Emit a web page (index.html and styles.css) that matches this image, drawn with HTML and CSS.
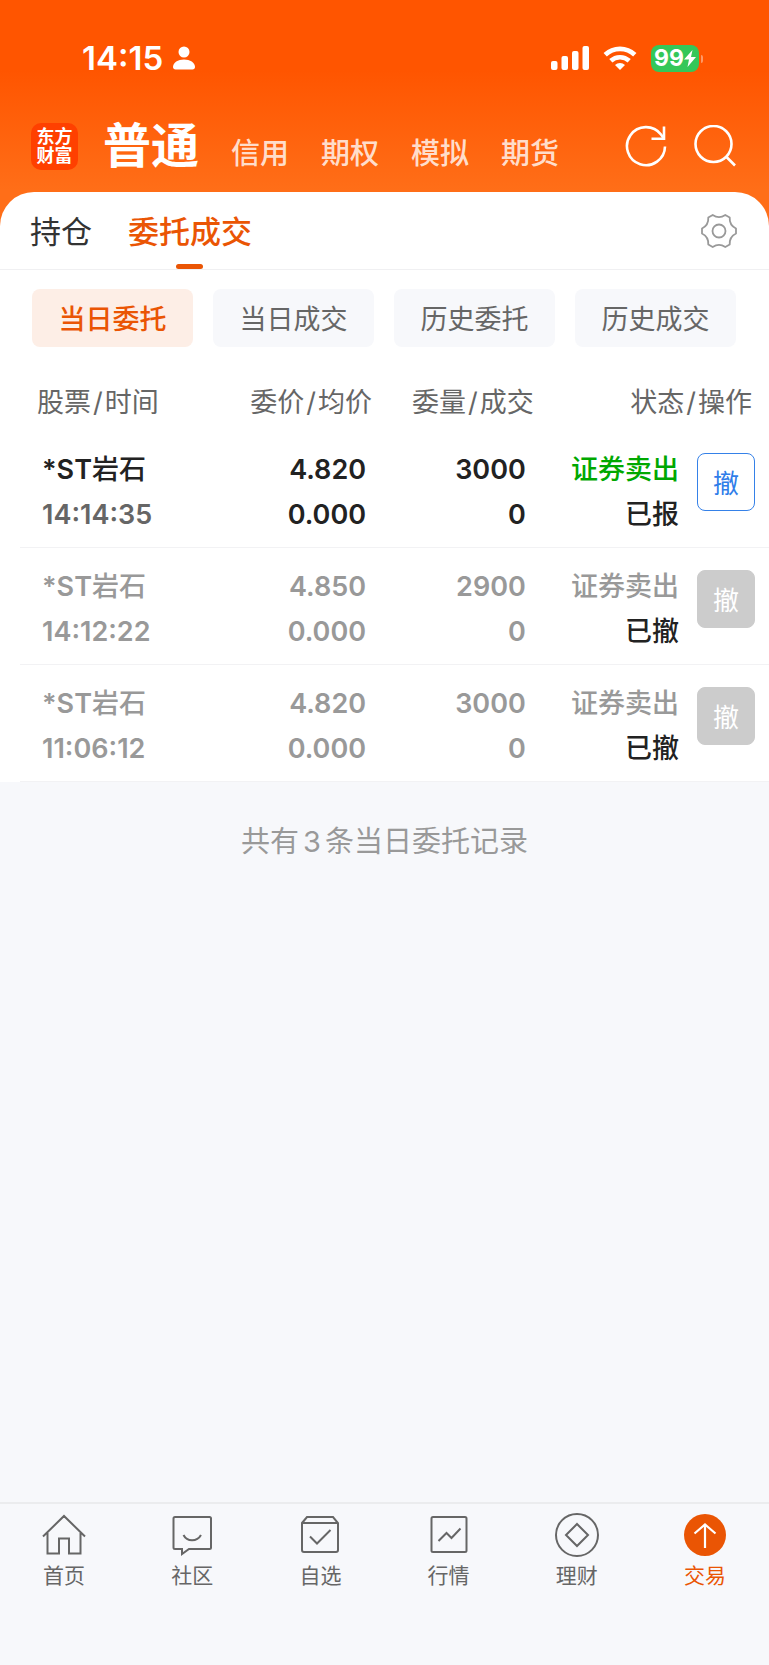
FILE: index.html
```
<!DOCTYPE html>
<html lang="zh-CN">
<head>
    <meta charset="UTF-8">
    <meta name="viewport" content="width=device-width, initial-scale=1.0">
    <title>委托成交</title>
    <link rel="stylesheet" href="styles.css">
</head>
<body>
    <header class="header">
        <div class="status-bar">
            <span class="time">14:15</span>
            <svg class="person" width="22" height="24" viewBox="0 0 22 24" fill="#fff">
                <circle cx="11" cy="6" r="5.500"/>
                <path d="M0 21C0 16.500 5 13.500 11 13.500S22 16.500 22 21C22 22.500 21 23.500 19.500 23.500H2.500C1 23.500 0 22.500 0 21Z"/>
            </svg>
            <div class="status-icons">
                <svg width="38" height="24" viewBox="0 0 38 24" fill="#fff">
                    <rect x="0" y="15" width="6.500" height="9" rx="2"/>
                    <rect x="10.500" y="10" width="6.500" height="14" rx="2"/>
                    <rect x="21" y="5" width="6.500" height="19" rx="2"/>
                    <rect x="31.500" y="0" width="6.500" height="24" rx="2"/>
                </svg>
                <svg width="34" height="24" viewBox="0 0 34 24">
                    <path d="M2.200 8.800A21.500 21.500 0 0 1 31.800 8.800" fill="none" stroke="#fff" stroke-width="4.800"/>
                    <path d="M7.800 14.800A13.500 13.500 0 0 1 26.200 14.800" fill="none" stroke="#fff" stroke-width="4.600"/>
                    <path d="M17 24L12 19A7.500 7.500 0 0 1 22 19Z" fill="#fff"/>
                </svg>
                <div class="battery">
                    <span>99</span>
                    <svg width="12" height="17" viewBox="0 0 12 17" fill="#fff">
                        <path d="M8.500 0L0 9.500H5L3.500 17L12 7H7Z"/>
                    </svg>
                </div>
            </div>
        </div>

        <div class="title-bar">
            <div class="logo">东方<br>财富</div>
            <nav class="accounts">
                <a href="#" class="current">普通</a>
                <a href="#">信用</a>
                <a href="#">期权</a>
                <a href="#">模拟</a>
                <a href="#">期货</a>
            </nav>
            <div class="actions">
                <button class="icon-btn" aria-label="刷新">
                    <svg width="42" height="42" viewBox="0 0 42 42" fill="none" stroke="#fff" stroke-width="2.600">
                        <path d="M40 21.500A19 19 0 1 1 36 9.500L38.500 13"/>
                        <path d="M39 1.500V13.700H26.500"/>
                    </svg>
                </button>
                <button class="icon-btn" aria-label="搜索">
                    <svg width="42" height="42" viewBox="0 0 42 42" fill="none" stroke="#fff" stroke-width="2.600">
                        <circle cx="19.500" cy="19" r="18"/>
                        <path d="M32 31.500L41 40.500"/>
                    </svg>
                </button>
            </div>
        </div>
    </header>

    <main class="sheet">
        <div class="tabs">
            <button class="tab">持仓</button>
            <button class="tab active">委托成交</button>
            <button class="icon-btn settings" aria-label="设置">
                <svg width="38" height="38" viewBox="-19 -19 38 38" fill="none" stroke="#999" stroke-width="1.800" stroke-linejoin="round">
                    <path d="M17 -2.500V2.500C12.900 4.600 10.400 8.900 10.700 13.500L6.300 16C2.500 13.500 -2.500 13.500 -6.300 16L-10.700 13.500C-10.400 8.900 -12.900 4.600 -17 2.500V-2.500C-12.900 -4.600 -10.400 -8.900 -10.700 -13.500L-6.300 -16C-2.500 -13.500 2.500 -13.500 6.300 -16L10.700 -13.500C10.400 -8.900 12.900 -4.600 17 -2.500Z"/>
                    <circle cx="0" cy="0" r="6.500"/>
                </svg>
            </button>
        </div>

        <div class="filters">
            <button class="filter active">当日委托</button>
            <button class="filter">当日成交</button>
            <button class="filter">历史委托</button>
            <button class="filter">历史成交</button>
        </div>

        <table class="orders">
            <colgroup>
                <col class="col-stock">
                <col class="col-price">
                <col class="col-amount">
                <col>
                <col class="col-operate">
            </colgroup>
            <thead>
                <tr>
                    <th class="stock-head">股票<span class="slash">/</span>时间</th>
                    <th>委价<span class="slash">/</span>均价</th>
                    <th class="amount-head">委量<span class="slash">/</span>成交</th>
                    <th class="state-head" colspan="2">状态<span class="slash">/</span>操作</th>
                </tr>
            </thead>
            <tbody>
                <tr>
                    <td class="stock">*ST<span class="name">岩石</span><br><span class="order-time">14:14:35</span></td>
                    <td class="price">4.820<br>0.000</td>
                    <td class="amount">3000<br>0</td>
                    <td class="state"><span class="sell">证券卖出</span><br><span class="result">已报</span></td>
                    <td class="operate"><button class="cancel-btn">撤</button></td>
                </tr>
                <tr class="cancelled">
                    <td class="stock">*ST<span class="name">岩石</span><br><span class="order-time">14:12:22</span></td>
                    <td class="price">4.850<br>0.000</td>
                    <td class="amount">2900<br>0</td>
                    <td class="state"><span class="sell">证券卖出</span><br><span class="result">已撤</span></td>
                    <td class="operate"><button class="cancel-btn" disabled>撤</button></td>
                </tr>
                <tr class="cancelled">
                    <td class="stock">*ST<span class="name">岩石</span><br><span class="order-time">11:06:12</span></td>
                    <td class="price">4.820<br>0.000</td>
                    <td class="amount">3000<br>0</td>
                    <td class="state"><span class="sell">证券卖出</span><br><span class="result">已撤</span></td>
                    <td class="operate"><button class="cancel-btn" disabled>撤</button></td>
                </tr>
            </tbody>
        </table>
    </main>

    <p class="summary">共有<span class="count">3</span>条当日委托记录</p>

    <nav class="bottom-nav">
        <a href="#">
            <svg width="44" height="44" viewBox="0 0 44 44">
                <path d="M1 23.500L22 3L43 23.500M5.500 20V40.500H17V25.500H27V40.500H38.500V20"/>
            </svg>
            首页
        </a>
        <a href="#">
            <svg width="44" height="44" viewBox="0 0 44 44">
                <path d="M5 4H39.500Q41 4 41 5.500V34.500Q41 36 39.500 36H19L12 41V36H5Q3.500 36 3.500 34.500V5.500Q3.500 4 5 4Z"/>
                <path d="M13.500 22C17 29 27 29 31 22"/>
            </svg>
            社区
        </a>
        <a href="#">
            <svg width="44" height="44" viewBox="0 0 44 44">
                <path d="M4 10L9 4H35L40 10V37Q40 39 38 39H6Q4 39 4 37ZM4 10H40"/>
                <path d="M12 23.500L19 30.500L32.500 17"/>
            </svg>
            自选
        </a>
        <a href="#">
            <svg width="44" height="44" viewBox="0 0 44 44">
                <rect x="4.500" y="4" width="35" height="35" rx="1.500"/>
                <path d="M11.500 28L19.500 20L24.500 25L33.500 15.500"/>
            </svg>
            行情
        </a>
        <a href="#">
            <svg width="44" height="44" viewBox="0 0 44 44">
                <circle cx="22" cy="22" r="21"/>
                <path d="M22 11L33 22L22 33L11 22Z"/>
            </svg>
            理财
        </a>
        <a href="#" class="current">
            <svg width="44" height="44" viewBox="0 0 44 44">
                <circle class="disc" cx="22" cy="22" r="21"/>
                <path class="arrow" d="M22 35V12M11.500 20.500L22 11.500L32.500 20.500"/>
            </svg>
            交易
        </a>
    </nav>
</body>
</html>
```

FILE: styles.css
```
* {
    box-sizing: border-box;
}

body {
    font-family: Inter, "Noto Sans CJK SC", sans-serif;
    margin: 0;
    min-height: 100vh;
    display: flex;
    flex-direction: column;
    background: #f7f8fb;
    color: #222;
}

a {
    text-decoration: none;
}

button {
    font-family: inherit;
    margin: 0;
    padding: 0;
    border: none;
    background: none;
    cursor: pointer;
}

svg {
    display: block;
}

/* Orange top area, runs on under the rounded corners of the sheet */
.header {
    background: linear-gradient(to bottom, #ff5500 70px, #ff6e18 190px);
    color: #fff;
    padding-bottom: 34px;
}

.status-bar {
    display: flex;
    align-items: center;
    padding: 36px 66px 0 82px;
    height: 80px;
}

.time {
    font-size: 33px;
    font-weight: 600;
}

.person {
    margin-left: 10px;
}

.status-icons {
    display: flex;
    align-items: center;
    gap: 14px;
    margin-left: auto;
}

.battery {
    position: relative;
    display: flex;
    align-items: center;
    justify-content: center;
    width: 48px;
    height: 27px;
    margin-right: 4px;
    border-radius: 8px;
    background: #34c759;
    font-size: 23px;
    font-weight: 700;
}

.battery::after {
    content: "";
    position: absolute;
    right: -4px;
    top: 10px;
    width: 2px;
    height: 8px;
    border-radius: 0 2px 2px 0;
    background: rgba(255, 255, 255, 0.4);
}

.title-bar {
    display: flex;
    align-items: center;
    height: 112px;
    padding: 20px 33px 0 31px;
}

.logo {
    width: 47px;
    height: 47px;
    padding-top: 4px;
    border-radius: 10px;
    background: #ff4000;
    font-size: 18px;
    font-weight: 700;
    line-height: 19px;
    text-align: center;
}

.accounts {
    display: flex;
    align-items: flex-end;
    gap: 32px;
    margin-left: 25px;
}

.accounts a {
    color: rgba(255, 255, 255, 0.8);
    font-size: 29px;
    font-weight: 500;
    line-height: 40px;
}

.accounts .current {
    color: #fff;
    font-size: 48px;
    font-weight: 600;
    line-height: 56px;
}

.actions {
    display: flex;
    gap: 27px;
    margin-left: auto;
}

.sheet {
    margin-top: -34px;
    border-radius: 34px 34px 0 0;
    background: #fff;
}

.tabs {
    display: flex;
    align-items: center;
    gap: 36px;
    height: 78px;
    padding: 0 31px 0 30px;
    border-bottom: 1px solid #f0f0f2;
}

.tab {
    position: relative;
    height: 77px;
    padding-bottom: 3px;
    font-size: 31px;
    color: #333;
}

.tab.active {
    color: #ea5504;
    font-weight: 500;
}

.tab.active::after {
    content: "";
    position: absolute;
    left: 50%;
    bottom: 0;
    width: 27px;
    height: 5px;
    margin-left: -14px;
    border-radius: 3px;
    background: #ea5504;
}

.settings {
    margin-left: auto;
}

.filters {
    display: flex;
    gap: 20px;
    padding: 19px 33px 0 32px;
}

.filter {
    flex: 1;
    height: 58px;
    padding-bottom: 2px;
    border-radius: 8px;
    background: #f7f8fb;
    color: #666;
    font-size: 27px;
}

.filter.active {
    background: #fdeee6;
    color: #ea5504;
    font-weight: 500;
}

.orders {
    width: calc(100% - 20px);
    margin-left: 20px;
    table-layout: fixed;
    border-collapse: collapse;
    font-size: 27px;
}

.col-stock {
    width: 24%;
}

.col-price {
    width: 23%;
}

.col-amount {
    width: 22%;
}

.col-operate {
    width: 90px;
}

.orders th {
    padding: 38px 0 10px;
    color: #666;
    font-weight: 400;
    line-height: 36px;
    text-align: right;
}

.orders .stock-head {
    padding-left: 17px;
    text-align: left;
}

.orders .amount-head {
    padding-right: 3px;
}

.orders .state-head {
    padding-right: 17px;
}

.slash {
    margin: 0 2px;
}

.orders td {
    padding: 16px 0 10px;
    border-bottom: 1px solid #f2f2f4;
    font-weight: 600;
    line-height: 45px;
    text-align: right;
    vertical-align: top;
}

.orders .stock {
    padding-left: 22px;
    text-align: left;
}

.name {
    font-weight: 500;
}

.order-time {
    color: #666;
}

.orders .price {
    padding-right: 6px;
}

.orders .amount {
    padding-right: 11px;
}

.orders .state {
    font-weight: 500;
}

.sell {
    color: #00a800;
}

.orders .operate {
    padding: 22px 14px 0 0;
}

.cancel-btn {
    display: block;
    width: 58px;
    height: 58px;
    margin-left: auto;
    padding-bottom: 2px;
    border: 1px solid #3581e8;
    border-radius: 8px;
    color: #2f7de9;
    font-size: 26px;
}

.cancel-btn:disabled {
    border-color: #ccc;
    background: #ccc;
    color: #fff;
    cursor: default;
}

.cancelled td,
.cancelled .order-time,
.cancelled .sell {
    color: #999;
}

.cancelled .result {
    color: #222;
}

.summary {
    margin: 40px 0;
    color: #999;
    font-size: 29px;
    line-height: 40px;
    text-align: center;
}

.count {
    margin: 0 4px;
}

.bottom-nav {
    display: flex;
    margin-top: auto;
    padding: 9px 0 74px;
    border-top: 2px solid #ebecee;
}

.bottom-nav a {
    flex: 1;
    display: flex;
    flex-direction: column;
    align-items: center;
    gap: 4px;
    color: #666;
    font-size: 21px;
    line-height: 30px;
}

.bottom-nav svg {
    fill: none;
    stroke: #666;
    stroke-width: 2;
}

.bottom-nav .current {
    color: #ea5504;
}

.bottom-nav .disc {
    fill: #ea5504;
    stroke: none;
}

.bottom-nav .arrow {
    stroke: #fff;
    stroke-width: 2.2;
}
```
